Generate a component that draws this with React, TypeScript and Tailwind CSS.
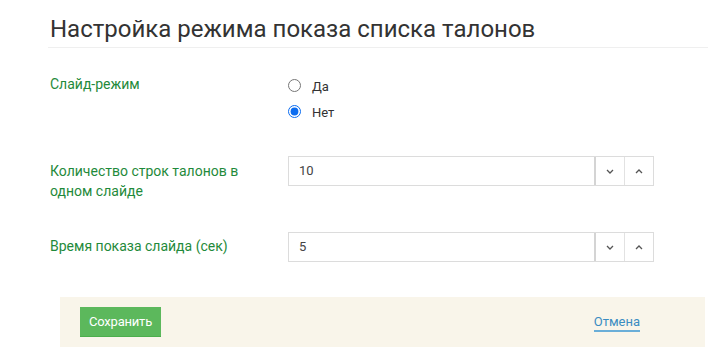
import { useState } from "react";

function Chevron({ up }: { up?: boolean }) {
  return (
    <svg width="8" height="5" viewBox="0 0 8 5" className="text-[#555]">
      <path
        d={up ? "M1 4 L4 1 L7 4" : "M1 1 L4 4 L7 1"}
        fill="none"
        stroke="currentColor"
        strokeWidth="1.3"
      />
    </svg>
  );
}

function NumberField({ value, onChange }: { value: number; onChange: (v: number) => void }) {
  return (
    <div className="flex h-[30px] w-[366px] border border-[#dcdcdc] bg-white">
      <input
        className="flex-1 min-w-0 px-[10px] text-[13px] text-[#444] outline-none border-r-2 border-[#d4d4d4]"
        value={value}
        onChange={(e) => onChange(Number(e.target.value) || 0)}
      />
      <button
        className="w-[29px] flex items-center justify-center border-r border-[#e2e2e2]"
        onClick={() => onChange(Math.max(0, value - 1))}
      >
        <Chevron />
      </button>
      <button
        className="w-[28px] flex items-center justify-center"
        onClick={() => onChange(value + 1)}
      >
        <Chevron up />
      </button>
    </div>
  );
}

export default function App() {
  const [slide, setSlide] = useState(false);
  const [rows, setRows] = useState(10);
  const [time, setTime] = useState(5);

  return (
    <div className="w-[708px] h-[355px] bg-white font-['Roboto',sans-serif] overflow-hidden">
      <div className="ml-[48px] pl-[2px] pt-[13px] pb-[2px] border-b border-[#efefef]">
        <h1 className="text-[24px] leading-[32px] text-[#333]">
          Настройка режима показа списка талонов
        </h1>
      </div>

      <div className="ml-[50px] mt-[26px]">
        <div className="flex">
          <div className="w-[238px] text-[14px] leading-[20px] text-[#1f8a3b]">Слайд-режим</div>
          <div className="flex flex-col -mt-[2px]">
            {[
              { label: "Да", v: true },
              { label: "Нет", v: false },
            ].map((o) => (
              <label key={o.label} className="flex items-center h-[26px] cursor-pointer">
                <input
                  type="radio"
                  name="slide"
                  checked={slide === o.v}
                  onChange={() => setSlide(o.v)}
                  className="w-[13px] h-[13px] accent-[#0b6cf0] m-0"
                />
                <span className="ml-[11px] text-[13px] text-[#333] mt-[4px]">{o.label}</span>
              </label>
            ))}
          </div>
        </div>

        <div className="flex mt-[32px]">
          <div className="w-[238px] pt-[5px] text-[14px] leading-[20px] text-[#1f8a3b]">
            Количество строк талонов в<br />одном слайде
          </div>
          <NumberField value={rows} onChange={setRows} />
        </div>

        <div className="flex mt-[31px]">
          <div className="w-[238px] pt-[4px] text-[14px] leading-[20px] text-[#1f8a3b]">
            Время показа слайда (сек)
          </div>
          <NumberField value={time} onChange={setTime} />
        </div>
      </div>

      <div className="ml-[60px] mt-[35px] w-[645px] h-[50px] bg-[#f9f5ea] flex items-center justify-between pl-[20px] pr-[65px]">
        <button className="h-[30px] w-[81px] bg-[#5cb85c] border-b border-[#4cae4c] text-white text-[13px] tracking-[-0.2px]">
          Сохранить
        </button>
        <a href="#" className="text-[13px] text-[#3a8dc2] border-b-2 border-[#6aaed8] leading-[16px] mt-[2px]">
          Отмена
        </a>
      </div>
    </div>
  );
}
